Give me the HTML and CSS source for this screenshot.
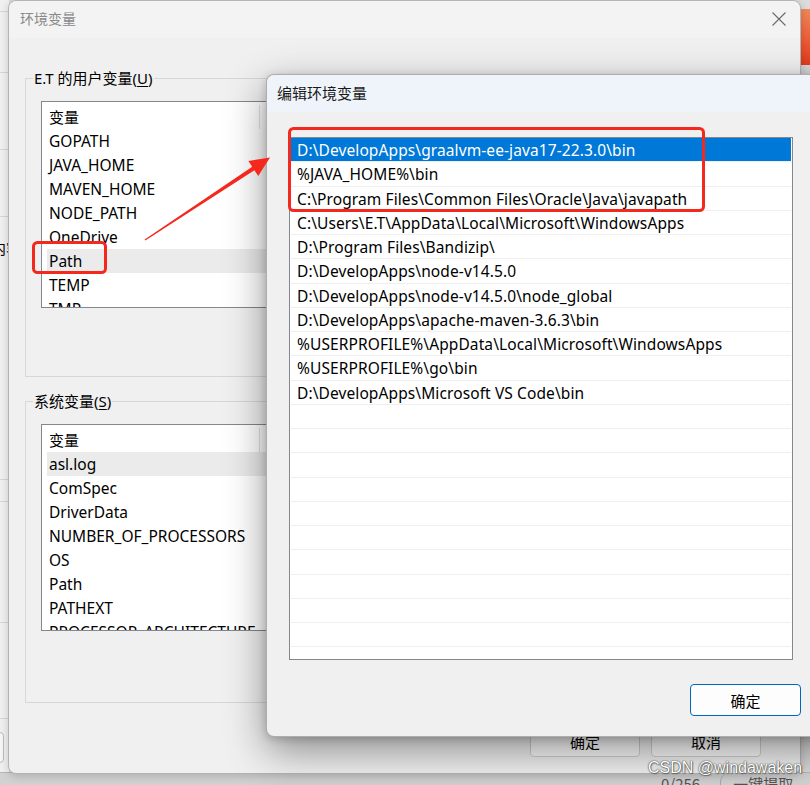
FILE: index.html
```html
<!DOCTYPE html>
<html lang="zh-CN">
<head>
<meta charset="utf-8">
<title>环境变量</title>
<link rel="stylesheet" href="styles.css">
</head>
<body>
<div class="desktop">
  <div class="bg-left">
    <div class="bl b1"></div>
    <div class="bl b2"></div>
    <div class="bl b3"></div>
    <div class="bl b4"></div>
    <div class="bl b5"><span class="bl-text">内容</span></div>
    <div class="bl b6"></div>
    <div class="bl b7"></div>
    <div class="bl b8"></div>
    <div class="bl b9"><span class="bl-btn"></span></div>
  </div>
  <div class="bg-orange"></div>
  <div class="bg-bottom">
    <span class="bb-count">0/256</span>
    <span class="bb-btn">一键提取</span>
  </div>

  <section class="win-main">
    <header class="titlebar">
      <span class="title">环境变量</span>
      <svg class="close" width="14" height="14" viewBox="0 0 14 14"><path d="M0.5 0.5L13.5 13.5M13.5 0.5L0.5 13.5" stroke="#6a6a6a" stroke-width="1.1" fill="none"/></svg>
    </header>
    <div class="main-body">
      <fieldset class="group g-user">
        <legend>E.T 的用户变量(<u>U</u>)</legend>
        <div class="vlist">
          <div class="vhead"><span class="vhead-cell">变量</span></div>
          <div class="vrow">GOPATH</div>
          <div class="vrow">JAVA_HOME</div>
          <div class="vrow">MAVEN_HOME</div>
          <div class="vrow">NODE_PATH</div>
          <div class="vrow">OneDrive</div>
          <div class="vrow hl">Path</div>
          <div class="vrow">TEMP</div>
          <div class="vrow">TMP</div>
        </div>
      </fieldset>
      <fieldset class="group g-sys">
        <legend>系统变量(<u>S</u>)</legend>
        <div class="vlist">
          <div class="vhead"><span class="vhead-cell">变量</span></div>
          <div class="vrow hl">asl.log</div>
          <div class="vrow">ComSpec</div>
          <div class="vrow">DriverData</div>
          <div class="vrow">NUMBER_OF_PROCESSORS</div>
          <div class="vrow">OS</div>
          <div class="vrow">Path</div>
          <div class="vrow">PATHEXT</div>
          <div class="vrow">PROCESSOR_ARCHITECTURE</div>
        </div>
      </fieldset>
      <div class="main-actions">
        <button class="btn">确定</button>
        <button class="btn">取消</button>
      </div>
    </div>
  </section>

  <section class="win-edit">
    <header class="edit-title">编辑环境变量</header>
    <div class="edit-body">
      <div class="plist">
        <div class="prow sel">D:\DevelopApps\graalvm-ee-java17-22.3.0\bin</div>
        <div class="prow">%JAVA_HOME%\bin</div>
        <div class="prow">C:\Program Files\Common Files\Oracle\Java\javapath</div>
        <div class="prow">C:\Users\E.T\AppData\Local\Microsoft\WindowsApps</div>
        <div class="prow">D:\Program Files\Bandizip\</div>
        <div class="prow">D:\DevelopApps\node-v14.5.0</div>
        <div class="prow">D:\DevelopApps\node-v14.5.0\node_global</div>
        <div class="prow">D:\DevelopApps\apache-maven-3.6.3\bin</div>
        <div class="prow">%USERPROFILE%\AppData\Local\Microsoft\WindowsApps</div>
        <div class="prow">%USERPROFILE%\go\bin</div>
        <div class="prow">D:\DevelopApps\Microsoft VS Code\bin</div>
        <div class="prow"></div>
        <div class="prow"></div>
        <div class="prow"></div>
        <div class="prow"></div>
        <div class="prow"></div>
        <div class="prow"></div>
        <div class="prow"></div>
        <div class="prow"></div>
        <div class="prow"></div>
        <div class="prow"></div>
        <div class="prow"></div>
      </div>
      <div class="edit-actions">
        <button class="btn primary">确定</button>
      </div>
    </div>
  </section>

  <svg class="annot" width="810" height="785" viewBox="0 0 810 785">
    <rect x="289.5" y="128.5" width="414" height="82" rx="4" fill="none" stroke="#f5281d" stroke-width="3"/>
    <rect x="33.5" y="242.5" width="72" height="30" rx="4" fill="none" stroke="#f5281d" stroke-width="3"/>
    <polygon points="144.67,239.5 252.21,166.84 248.35,161.0 270,157.5 258.27,176.02 254.41,170.18 145.33,240.5" fill="#f5281d"/>
  </svg>

  <div class="watermark">CSDN @windawaken</div>
</div>
</body>
</html>
```
FILE: styles.css
```css
* { box-sizing: border-box; }
body { margin: 0; }

.desktop {
  position: relative;
  width: 810px;
  height: 785px;
  overflow: hidden;
  background: #dcdcdc;
  font-family: "Noto Sans", "Noto Sans CJK SC", sans-serif;
  font-size: 15px;
  color: #000;
}

/* background app, left strip */
.bg-left {
  position: absolute;
  left: 0;
  top: 0;
  width: 9px;
  height: 785px;
  background: #f1f1f1;
  display: flex;
  flex-direction: column;
  overflow: hidden;
}
.bl { border-bottom: 1px solid #d6d6d6; flex: none; }
.b1 { height: 12px; }
.b2 { height: 61px; }
.b3 { height: 77px; }
.b4 { height: 67px; }
.b5 { height: 263px; padding-top: 21px; }
.b6 { height: 22px; }
.b7 { height: 121px; }
.b8 { height: 96px; }
.b9 { flex: 1; border-bottom: 0; padding-top: 13px; }
.bl-text {
  display: block;
  margin-left: -9px;
  white-space: nowrap;
  font-family: "Noto Sans CJK SC", sans-serif;
  font-size: 15px;
  line-height: 20px;
}
.bl-btn {
  display: block;
  margin-left: -10px;
  width: 14px;
  height: 31px;
  border: 1px solid #bdbdbd;
  border-radius: 4px;
  background: #f7f7f7;
}

.bg-orange {
  position: absolute;
  left: 801px;
  top: 9px;
  width: 9px;
  height: 56px;
  background: linear-gradient(#f2875a, #e83c1d);
}

.bg-bottom {
  position: absolute;
  left: 0;
  top: 772px;
  width: 810px;
  height: 13px;
  background: #d2d2d2;
  border-top: 1px solid #b8b8b8;
  color: #555;
  font-family: "Noto Sans CJK SC", sans-serif;
  font-size: 15px;
  line-height: 20px;
  display: flex;
  align-items: flex-start;
}
.bb-count { margin-left: 661px; margin-top: 1px; }
.bb-btn {
  margin-left: 20px;
  padding-left: 12px;
  margin-top: 1px;
  border-left: 1px solid #aaa;
  border-radius: 8px 0 0 0;
}

/* main window */
.win-main {
  position: absolute;
  left: 8px;
  top: 0;
  width: 793px;
  height: 774px;
  background: #f0f0f0;
  border: 1px solid #b4b4b4;
  border-radius: 8px;
  box-shadow: 0 2px 10px rgba(0,0,0,0.18);
}
.titlebar {
  height: 37px;
  display: flex;
  align-items: center;
  justify-content: space-between;
  padding: 0 14px 3px 11px;
  background: #f3f3f3;
  border-radius: 8px 8px 0 0;
}
.title {
  font-family: "Noto Sans CJK SC", sans-serif;
  font-size: 14px;
  color: #8a8a8a;
  line-height: 20px;
}
.close { display: block; margin-top: 1px; }

.main-body { padding: 30px 16px 0 16px; }

.group {
  margin: 0;
  border: 1px solid #d7d7d7;
  padding: 0 0 68px 15px;
  min-width: 0;
}
.g-sys { margin-top: 14px; padding-bottom: 71px; }
.group legend {
  margin-left: -8px;
  padding: 0 1px;
  font-size: 15px;
  line-height: 20px;
}
.group legend u { text-underline-offset: 2px; }

.vlist {
  margin-top: 13px;
  width: 640px;
  height: 207px;
  border: 1px solid #828790;
  background: #fff;
  padding-top: 3px;
  overflow: hidden;
  font-size: 15.5px;
}
.vhead { height: 24px; }
.vhead-cell {
  display: block;
  width: 218px;
  height: 24px;
  line-height: 24px;
  padding-left: 7px;
  border-right: 1px solid #e3e3e3;
  font-family: "Noto Sans CJK SC", sans-serif;
  font-size: 15px;
}
.vrow {
  height: 24px;
  line-height: 24px;
  margin-left: 5px;
  padding-left: 2px;
  white-space: nowrap;
}
.vrow.hl { background: #ebebeb; }

.main-actions {
  margin-top: 22px;
  display: flex;
  justify-content: flex-end;
  gap: 11px;
  padding-right: 23px;
}
.btn {
  width: 110px;
  height: 32px;
  background: #fbfbfb;
  border: 1px solid #cfcfcf;
  border-radius: 4px;
  font-family: "Noto Sans CJK SC", sans-serif;
  font-size: 15px;
  color: #000;
  padding: 0;
}

/* edit dialog */
.win-edit {
  position: absolute;
  left: 266px;
  top: 74px;
  width: 680px;
  height: 663px;
  background: #f0f0f0;
  border: 1px solid rgba(0,0,0,0.28);
  border-radius: 8px;
  box-shadow: 0 14px 40px rgba(0,0,0,0.42), 0 2px 8px rgba(0,0,0,0.18);
}
.edit-title {
  height: 37px;
  line-height: 35px;
  padding-left: 10px;
  background: #eef4f9;
  border-radius: 8px 8px 0 0;
  font-family: "Noto Sans CJK SC", sans-serif;
  font-size: 15px;
  color: #1a1a1a;
}
.edit-body { padding: 25px 0 0 22px; }
.plist {
  width: 504px;
  height: 523px;
  border: 1px solid #828790;
  background: #fff;
  padding: 0 1px;
  overflow: hidden;
  font-size: 15.5px;
  letter-spacing: 0.1px;
}
.prow {
  height: 24.25px;
  line-height: 24px;
  padding-left: 6px;
  border-bottom: 1px solid #efefef;
  white-space: nowrap;
}
.prow.sel { background: #0078d7; color: #fff; }
.edit-actions { margin-top: 24px; margin-left: 401px; }
.btn.primary {
  width: 111px;
  border-color: #0067c0;
  background: #fdfdfd;
}

.annot {
  position: absolute;
  left: 0;
  top: 0;
  pointer-events: none;
}

.watermark {
  position: absolute;
  left: 648px;
  top: 758px;
  font-family: "Liberation Sans", sans-serif;
  font-size: 16px;
  line-height: 20px;
  color: #fff;
  white-space: nowrap;
  text-shadow: 0 0 1px rgba(0,0,0,0.8), 0 0 2px rgba(0,0,0,0.5), 1px 1px 1px rgba(0,0,0,0.3);
}
```
